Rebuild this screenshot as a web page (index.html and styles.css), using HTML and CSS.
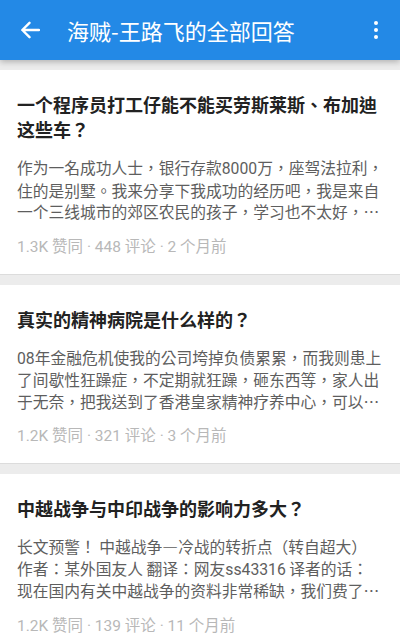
FILE: index.html
```html
<!DOCTYPE html>
<html lang="zh-CN">
<head>
<meta charset="utf-8">
<title>海贼-王路飞的全部回答</title>
<link rel="stylesheet" href="styles.css">
</head>
<body>
<header class="appbar">
  <svg class="back" width="20" height="18" viewBox="0 0 20 18"><path d="M19 9H2.5M9.5 1.8L2.3 9l7.2 7.2" fill="none" stroke="#fff" stroke-width="2.4" stroke-linecap="round" stroke-linejoin="round"/></svg>
  <h1 class="appbar-title">海贼-王路飞的全部回答</h1>
  <div class="more"><span></span><span></span><span></span></div>
</header>
<main class="list" lang="zh-TW">
  <article class="card">
    <h2 class="q">一个程序员打工仔能不能买劳斯莱斯、布加迪这些车？</h2>
    <p class="excerpt">作为一名成功人士，银行存款<span class="num">8000</span>万，座驾法拉利，<br>住的是别墅。我来分享下我成功的经历吧，我是来自<br>一个三线城市的郊区农民的孩子，学习也不太好，<span class="fw">…</span></p>
    <div class="meta">1.3K 赞同 · 448 评论 · 2 个月前</div>
  </article>
  <article class="card">
    <h2 class="q">真实的精神病院是什么样的？</h2>
    <p class="excerpt"><span class="num">08</span>年金融危机使我的公司垮掉负债累累，而我则患上<br>了间歇性狂躁症，不定期就狂躁，砸东西等，家人出<br>于无奈，把我送到了香港皇家精神疗养中心，可以<span class="fw">…</span></p>
    <div class="meta">1.2K 赞同 · 321 评论 · 3 个月前</div>
  </article>
  <article class="card">
    <h2 class="q">中越战争与中印战争的影响力多大？</h2>
    <p class="excerpt">长文预警！ 中越战争<span class="fw">—</span>冷战的转折点（转自超大）<br>作者：某外国友人 翻译：网友<span class="num">ss43316</span> 译者的话：<br>现在国内有关中越战争的资料非常稀缺，我们费了<span class="fw">…</span></p>
    <div class="meta">1.2K 赞同 · 139 评论 · 11 个月前</div>
  </article>
</main>
</body>
</html>
```
FILE: styles.css
```css
html, body {
  margin: 0;
  padding: 0;
}
body {
  width: 400px;
  height: 635px;
  overflow: hidden;
  background: #ececec;
  font-family: "Noto Sans CJK TC", "Noto Sans CJK SC", sans-serif;
}
.appbar {
  position: relative;
  z-index: 2;
  height: 60px;
  background: #2389e6;
  display: flex;
  align-items: center;
  padding: 0 0 0 20px;
  box-shadow: 0 2px 6px rgba(0, 0, 0, 0.25);
}
.back {
  flex: none;
}
.appbar-title {
  margin: 0 0 0 27px;
  font-family: "Noto Sans CJK SC", sans-serif;
  font-size: 22px;
  font-weight: 400;
  color: #fff;
  line-height: 30px;
  flex: 1;
}
.more {
  display: flex;
  flex-direction: column;
  gap: 2.5px;
  margin-right: 22px;
}
.more span {
  width: 4.5px;
  height: 4.5px;
  border-radius: 50%;
  background: #fff;
}
.list {
  padding-top: 10px;
  display: flex;
  flex-direction: column;
  gap: 10px;
}
.card {
  background: #fff;
  padding: 22px 17px 17px;
  border-bottom: 1px solid #dcdcdc;
}
.q {
  margin: 0;
  font-size: 18px;
  line-height: 25px;
  font-weight: 700;
  color: #222;
}
.excerpt {
  margin: 15px 0 0;
  font-size: 15.75px;
  line-height: 21.5px;
  color: #5e5e5e;
  white-space: nowrap;
}
.num {
  font-family: Roboto, sans-serif;
}
.fw {
  font-feature-settings: "fwid" 1;
}
.meta {
  margin-top: 14px;
  font-family: Roboto, "Noto Sans CJK SC", sans-serif;
  font-size: 15.5px;
  line-height: 20px;
  color: #b8b8b8;
}
```
